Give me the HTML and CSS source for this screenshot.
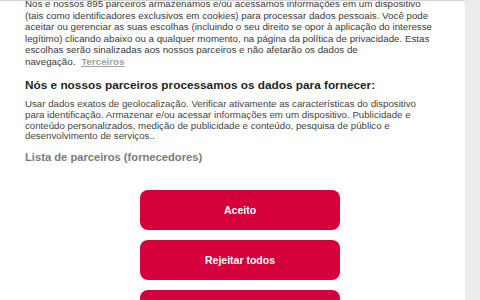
FILE: index.html
```html
<!DOCTYPE html>
<html lang="pt">
<head>
<meta charset="utf-8">
<link rel="stylesheet" href="styles.css">
</head>
<body>
<div class="frame">
  <main class="dialog">
    <div class="scroll">
      <p class="intro">Nós e nossos 895 parceiros armazenamos e/ou acessamos informações em um dispositivo (tais como identificadores exclusivos em cookies) para processar dados pessoais. Você pode aceitar ou gerenciar as suas escolhas (incluindo o seu direito se opor à aplicação do interesse legítimo) clicando abaixo ou a qualquer momento, na página da política de privacidade. Estas escolhas serão sinalizadas aos nossos parceiros e não afetarão os dados de <span class="nowrap">navegação. <a class="link" href="#">Terceiros</a></span></p>
      <h2 class="heading">Nós e nossos parceiros processamos os dados para fornecer:</h2>
      <p class="purposes">Usar dados exatos de geolocalização. Verificar ativamente as características do dispositivo para identificação. Armazenar e/ou acessar informações em um dispositivo. Publicidade e conteúdo personalizados, medição de publicidade e conteúdo, pesquisa de público e desenvolvimento de serviços..</p>
      <div class="vendors">Lista de parceiros (fornecedores)</div>
      <div class="actions">
        <button class="btn">Aceito</button>
        <button class="btn">Rejeitar todos</button>
        <button class="btn">Mostrar propósitos</button>
      </div>
    </div>
  </main>
  <aside class="gutter"></aside>
</div>
</body>
</html>
```
FILE: styles.css
```css
html, body {
  margin: 0;
  padding: 0;
  background: #ffffff;
  height: 300px;
  overflow: hidden;
}
.frame {
  display: flex;
  height: 300px;
}
.dialog {
  width: 465px;
  border-top: 1px solid #d4d4d4;
  overflow: hidden;
  box-sizing: border-box;
}
.scroll {
  margin-top: -3px;
  padding: 0 30px 0 25px;
  font-family: "Liberation Sans", Arial, sans-serif;
  color: #3a3a3a;
}
.gutter {
  width: 15px;
  background: #ececec;
}
.intro {
  margin: 0;
  font-size: 9.75px;
  line-height: 11.5px;
}
.nowrap {
  white-space: nowrap;
}
.link {
  color: #a0a0a0;
  font-weight: bold;
  text-decoration: underline;
  margin-left: 3px;
}
.heading {
  margin: 11px 0 0;
  font-size: 11.8px;
  line-height: 14px;
  font-weight: bold;
  color: #1f1f1f;
}
.purposes {
  margin: 7px 0 0;
  font-size: 9.7px;
  line-height: 10.8px;
  color: #444;
}
.vendors {
  margin-top: 8px;
  font-size: 11.2px;
  line-height: 14px;
  font-weight: bold;
  color: #7a7a7a;
}
.actions {
  display: flex;
  flex-direction: column;
  align-items: center;
  gap: 10px;
  margin-top: 26px;
  padding-left: 20px;
}
.btn {
  width: 200px;
  height: 40px;
  border: none;
  border-radius: 8px;
  background: #d5003b;
  color: #ffffff;
  font-family: "Liberation Sans", Arial, sans-serif;
  font-size: 10.5px;
  font-weight: bold;
  flex-shrink: 0;
}
```
